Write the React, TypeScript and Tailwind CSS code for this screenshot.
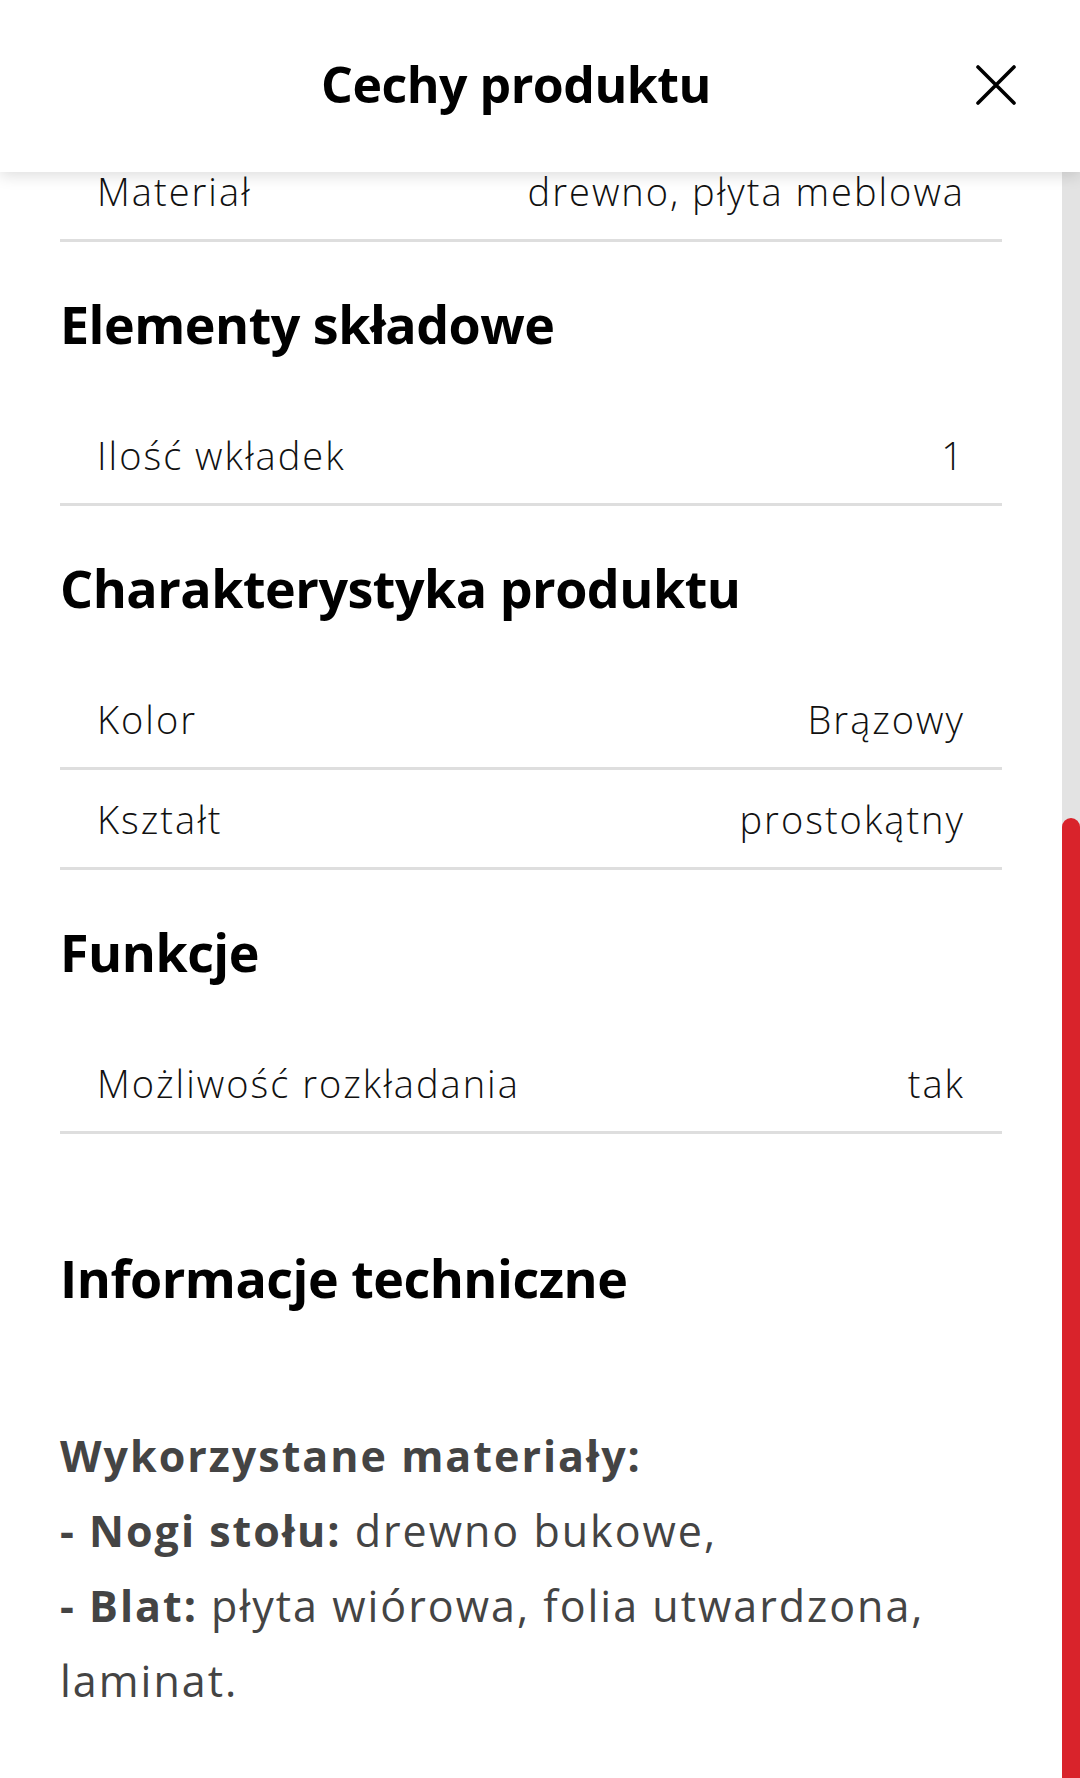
const font = { fontFamily: "'Open Sans', 'Noto Sans', sans-serif" };

function Row({ label, value }: { label: string; value: string }) {
  return (
    <div className="flex items-center justify-between h-[100px] px-[37px] border-b-[3px] border-[#dedede] text-[38px] leading-[36px] font-light text-[#111] tracking-[2px]">
      <span>{label}</span>
      <span>{value}</span>
    </div>
  );
}

function Heading({ children, extra }: { children: string; extra?: boolean }) {
  return (
    <h2
      className={
        "text-[52px] leading-[66px] font-bold text-black pb-[49px] tracking-[-0.5px] " +
        (extra ? "pt-[111px]" : "pt-[49px]")
      }
    >
      {children}
    </h2>
  );
}

export default function App() {
  return (
    <div className="w-[1080px] h-[1778px] bg-white flex flex-col overflow-hidden" style={font}>
      <header className="relative z-10 h-[172px] shrink-0 bg-white shadow-[0_4px_14px_rgba(0,0,0,0.13)] flex items-center justify-center">
        <h1 className="text-[50px] font-bold text-black tracking-[-0.5px] -mt-[4px] mr-[48px]">Cechy produktu</h1>
        <button className="absolute right-[64px] top-[65px] text-black">
          <svg width="40" height="40" viewBox="0 0 40 40" fill="none" stroke="currentColor" strokeWidth="3.6" strokeLinecap="round">
            <path d="M2 2 L38 38 M38 2 L2 38" />
          </svg>
        </button>
      </header>

      <div className="flex flex-1 min-h-0">
        <div className="flex-1 overflow-hidden px-[60px]">
          <div className="-mt-[30px]">
            <Row label="Materiał" value="drewno, płyta meblowa" />

            <Heading>Elementy składowe</Heading>
            <Row label="Ilość wkładek" value="1" />

            <Heading>Charakterystyka produktu</Heading>
            <Row label="Kolor" value="Brązowy" />
            <Row label="Kształt" value="prostokątny" />

            <Heading>Funkcje</Heading>
            <Row label="Możliwość rozkładania" value="tak" />

            <Heading extra>Informacje techniczne</Heading>
            <div className="pt-[58px] text-[43px] leading-[75px] text-[#444] font-normal tracking-[2px] pr-[20px]">
              <p className="font-bold">Wykorzystane materiały:</p>
              <p>
                <span className="font-bold">- Nogi stołu:</span> drewno bukowe,
              </p>
              <p>
                <span className="font-bold">- Blat:</span> płyta wiórowa, folia utwardzona, laminat.
              </p>
            </div>
          </div>
        </div>

        <div className="w-[18px] shrink-0 bg-[#e3e3e3] flex flex-col">
          <div className="h-[646px] shrink-0" />
          <div className="flex-1 bg-[#d9232b] rounded-t-full" />
        </div>
      </div>
    </div>
  );
}
